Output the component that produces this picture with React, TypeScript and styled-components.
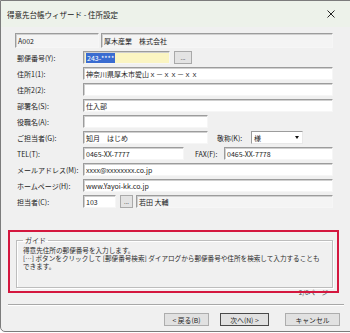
import React from "react";
import styled, { createGlobalStyle } from "styled-components";

const GlobalStyle = createGlobalStyle`
  html, body {
    margin: 0;
    padding: 0;
    background: #ffffff;
  }
  body {
    font-family: "Noto Sans CJK JP", "Noto Sans", sans-serif;
  }
`;

const Window = styled.div`
  width: 352px;
  height: 332px;
  box-sizing: border-box;
  background: #f0f0f0;
  border: 1px solid #7c7c7c;
  border-radius: 0 0 0 5px;
  overflow: hidden;
  font-size: 7px;
  color: #1e1e1e;
  display: flex;
  flex-direction: column;
`;

const TitleBar = styled.div`
  height: 26px;
  flex: none;
  display: flex;
  align-items: center;
  justify-content: space-between;
  padding: 0 16px 0 6px;
  background: #edf2ea;
`;

const Title = styled.span`
  font-size: 7.5px;
  color: #202020;
`;

const Body = styled.div`
  padding: 0 18px 0 14px;
`;

const HeaderRow = styled.div`
  margin-top: 6px;
  height: 15px;
  display: flex;
  gap: 2px;
`;

const Form = styled.div`
  margin-top: 3px;
  display: flex;
  flex-direction: column;
  gap: 3px;
`;

const Row = styled.div`
  height: 13px;
  display: flex;
  align-items: center;
`;

const Label = styled.span<{ $width?: number; $ml?: number }>`
  width: ${(p) => p.$width ?? 66}px;
  padding-left: ${(p) => (p.$width ? 0 : 2)}px;
  margin-left: ${(p) => p.$ml ?? 0}px;
  flex: none;
  white-space: nowrap;
  color: #222;
`;

const TextBox = styled.div<{ $width?: number; $yellow?: boolean; $readOnly?: boolean; $ml?: number }>`
  box-sizing: border-box;
  height: 100%;
  width: ${(p) => (p.$width ? `${p.$width}px` : "auto")};
  flex: ${(p) => (p.$width ? "none" : "1")};
  margin-left: ${(p) => p.$ml ?? 0}px;
  display: flex;
  align-items: center;
  padding-left: 2px;
  white-space: nowrap;
  overflow: hidden;
  background: ${(p) => (p.$yellow ? "#fbf5c2" : p.$readOnly ? "#f4f4f4" : "#ffffff")};
  border-style: solid;
  border-width: 1px;
  border-color: #9c9c9c #f6f6f6 #f6f6f6 #9c9c9c;
  box-shadow: inset 1px 1px 0 #d0d0d0;
  color: #1c1c1c;
`;

const Selected = styled.span`
  background: #3a6cd0;
  color: #ffffff;
  padding: 0 1px;
`;

const SmallButton = styled.div<{ $width: number; $ml: number }>`
  box-sizing: border-box;
  width: ${(p) => p.$width}px;
  height: 100%;
  margin-left: ${(p) => p.$ml}px;
  flex: none;
  display: flex;
  align-items: center;
  justify-content: center;
  background: #e3e3e3;
  border: 1px solid #a9a9a9;
  font-size: 6px;
  color: #333;
`;

const Combo = styled.div`
  box-sizing: border-box;
  width: 52px;
  height: 100%;
  flex: none;
  display: flex;
  align-items: center;
  justify-content: space-between;
  padding: 0 3px 0 2px;
  background: #ffffff;
  border-style: solid;
  border-width: 1px;
  border-color: #9c9c9c #e8e8e8 #e8e8e8 #9c9c9c;
`;

const DropArrow = styled.span`
  width: 0;
  height: 0;
  border-left: 2.5px solid transparent;
  border-right: 2.5px solid transparent;
  border-top: 3px solid #111;
`;

const GuideArea = styled.div`
  position: relative;
  margin-top: 22px;
  padding-top: 5px;
`;

const GuideBox = styled.fieldset`
  margin: 0 0 0 1px;
  padding: 1px 6px 17px;
  border: 1px solid #bdbdbd;
  box-shadow: inset 1px 1px 0 #ffffff, 1px 1px 0 #ffffff;
  min-width: 0;
`;

const GuideLegend = styled.legend`
  padding: 0 2px;
  font-size: 7px;
  line-height: 10px;
  color: #333;
`;

const GuideText = styled.div`
  font-size: 6.6px;
  line-height: 8px;
  color: #2a2a2a;
  white-space: nowrap;
`;

const PageLabel = styled.div`
  height: 9px;
  line-height: 9px;
  text-align: right;
  padding-right: 5px;
  font-size: 6.5px;
  color: #4a4a4a;
`;

const Highlight = styled.div`
  position: absolute;
  top: 0;
  left: -7px;
  right: -6px;
  bottom: 4px;
  border: 2px solid #d4173f;
  pointer-events: none;
`;

const Separator = styled.div`
  margin: 7px 7px 0 7px;
  border-top: 1px solid #a8a8a8;
  border-bottom: 1px solid #ffffff;
`;

const ButtonRow = styled.div`
  margin-top: 7px;
  padding-right: 11px;
  display: flex;
  justify-content: flex-end;
  gap: 11px;
`;

const WizardButton = styled.div<{ $width: number; $default?: boolean; $ml?: number }>`
  box-sizing: border-box;
  width: ${(p) => p.$width}px;
  height: 13px;
  margin-left: ${(p) => p.$ml ?? 0}px;
  display: flex;
  align-items: center;
  justify-content: center;
  background: #e1e1e1;
  border: 1px solid ${(p) => (p.$default ? "#4a4a4a" : "#adadad")};
  font-size: 6.8px;
  color: #222;
  white-space: nowrap;
`;

const CloseIcon = () => (
  <svg width="8" height="8" viewBox="0 0 8 8">
    <path d="M0.5 0.5 L7.5 7.5 M7.5 0.5 L0.5 7.5" stroke="#222" strokeWidth="1" />
  </svg>
);

export default function App() {
  return (
    <>
      <GlobalStyle />
      <Window>
        <TitleBar>
          <Title>得意先台帳ウィザード - 住所設定</Title>
          <CloseIcon />
        </TitleBar>
        <Body>
          <HeaderRow>
            <TextBox $width={84} $readOnly>A002</TextBox>
            <TextBox $readOnly>厚木産業　株式会社</TextBox>
          </HeaderRow>
          <Form>
            <Row>
              <Label>郵便番号(Y):</Label>
              <TextBox $width={87} $yellow>
                <Selected>243-****</Selected>
              </TextBox>
              <SmallButton $width={18} $ml={4}>...</SmallButton>
            </Row>
            <Row>
              <Label>住所1(1):</Label>
              <TextBox>神奈川県厚木市愛山ｘ－ｘｘ－ｘｘ</TextBox>
            </Row>
            <Row>
              <Label>住所2(2):</Label>
              <TextBox />
            </Row>
            <Row>
              <Label>部署名(S):</Label>
              <TextBox>仕入部</TextBox>
            </Row>
            <Row>
              <Label>役職名(A):</Label>
              <TextBox $width={125} />
            </Row>
            <Row>
              <Label>ご担当者(G):</Label>
              <TextBox $width={125}>知月　はじめ</TextBox>
              <Label $width={34} $ml={9}>敬称(K):</Label>
              <Combo>
                <span>様</span>
                <DropArrow />
              </Combo>
            </Row>
            <Row>
              <Label>TEL(T):</Label>
              <TextBox $width={101}>0465-XX-7777</TextBox>
              <Label $width={29} $ml={11}>FAX(F):</Label>
              <TextBox>0465-XX-7778</TextBox>
            </Row>
            <Row>
              <Label>メールアドレス(M):</Label>
              <TextBox>xxxx@xxxxxxxx.co.jp</TextBox>
            </Row>
            <Row>
              <Label>ホームページ(H):</Label>
              <TextBox>www.Yayoi-kk.co.jp</TextBox>
            </Row>
            <Row>
              <Label>担当者(C):</Label>
              <TextBox $width={33}>103</TextBox>
              <SmallButton $width={13} $ml={4}>...</SmallButton>
              <TextBox $readOnly $ml={3}>若田 大輔</TextBox>
            </Row>
          </Form>
          <GuideArea>
            <GuideBox>
              <GuideLegend>ガイド</GuideLegend>
              <GuideText>得意先住所の郵便番号を入力します。</GuideText>
              <GuideText>[…] ボタンをクリックして [郵便番号検索] ダイアログから郵便番号や住所を検索して入力することも</GuideText>
              <GuideText>できます。</GuideText>
            </GuideBox>
            <PageLabel>2/6ページ</PageLabel>
            <Highlight />
          </GuideArea>
        </Body>
        <Separator />
        <ButtonRow>
          <WizardButton $width={45}>&lt; 戻る(B)</WizardButton>
          <WizardButton $width={49} $default>次へ(N) &gt;</WizardButton>
          <WizardButton $width={55} $ml={5}>キャンセル</WizardButton>
        </ButtonRow>
      </Window>
    </>
  );
}
